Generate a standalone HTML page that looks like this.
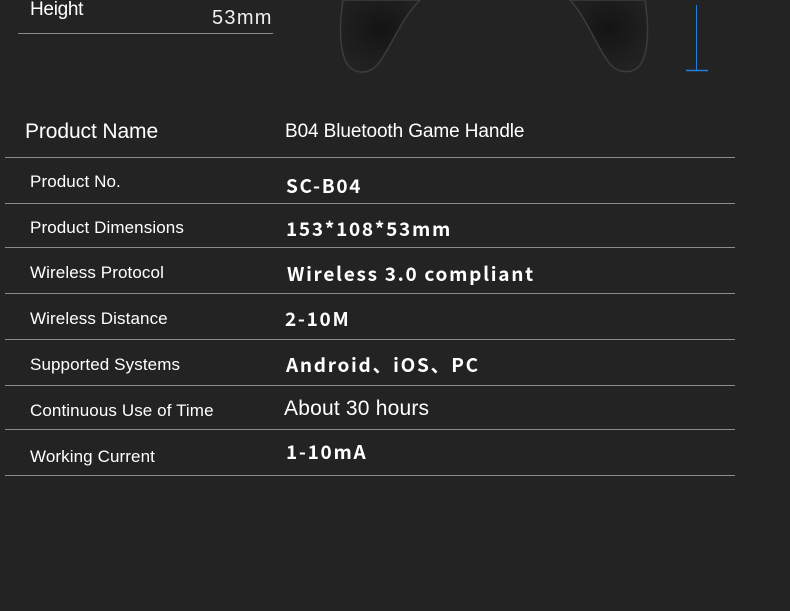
<html><head><style>
body{margin:0;width:790px;height:611px;background:#232323;overflow:hidden;position:relative;font-family:"Liberation Sans",Arial,sans-serif;color:#fff}
.t{position:absolute;white-space:nowrap}
.l{font-size:17px;letter-spacing:0.1px}
.v{font-family:"Noto Sans CJK SC","DejaVu Sans",sans-serif;font-weight:bold;font-size:19px;letter-spacing:1.7px}
.h{position:absolute;height:1px;background:#8a8a8a;left:5px;width:730px}
</style></head><body>
<svg style="position:absolute;left:0;top:0" width="790" height="80">
<defs><radialGradient id="g" cx="0.5" cy="0.4" r="0.6"><stop offset="0" stop-color="#141414"/><stop offset="1" stop-color="#222"/></radialGradient></defs>
<path d="M343 0 C340 20 338 45 346 62 C352 74 368 76 378 64 C392 46 400 20 420 0 Z" fill="url(#g)" stroke="#3c3c3c" stroke-width="1.5"/>
<path d="M645 0 C648 20 650 45 642 62 C636 74 620 75 610 64 C596 46 588 20 570 0 Z" fill="url(#g)" stroke="#3c3c3c" stroke-width="1.5"/>
<line x1="696.5" y1="5" x2="696.5" y2="70" stroke="#1e7fe0" stroke-width="1"/>
<line x1="686" y1="70.5" x2="708" y2="70.5" stroke="#1e7fe0" stroke-width="1.5"/>
</svg>
<div class="t" style="left:30px;top:-1px;font-size:19px;letter-spacing:-0.3px">Height</div>
<div class="t" style="left:212px;top:7px;font-size:20px;letter-spacing:1.3px;color:#eee">53mm</div>
<div style="position:absolute;left:18px;top:33px;width:255px;height:1px;background:#8a8a8a"></div>

<div class="t" style="left:25px;top:120px;font-size:21px;letter-spacing:-0.1px">Product Name</div>
<div class="t" style="left:285px;top:121px;font-size:19px;letter-spacing:-0.1px">B04 Bluetooth Game Handle</div>
<div class="h" style="top:157px"></div>
<div class="t l" style="left:30px;top:172px">Product No.</div>
<div class="t v" style="left:286px;top:172px">SC-B04</div>
<div class="h" style="top:203px"></div>
<div class="t l" style="left:30px;top:218px">Product Dimensions</div>
<div class="t v" style="left:286px;top:215px">153*108*53mm</div>
<div class="h" style="top:247px"></div>
<div class="t l" style="left:30px;top:263px">Wireless Protocol</div>
<div class="t v" style="left:287px;top:260px">Wireless 3.0 compliant</div>
<div class="h" style="top:293px"></div>
<div class="t l" style="left:30px;top:309px">Wireless Distance</div>
<div class="t v" style="left:285px;top:305px">2-10M</div>
<div class="h" style="top:339px"></div>
<div class="t l" style="left:30px;top:355px">Supported Systems</div>
<div class="t v" style="left:286px;top:351px">Android、iOS、PC</div>
<div class="h" style="top:385px"></div>
<div class="t l" style="left:30px;top:401px">Continuous Use of Time</div>
<div class="t" style="left:284px;top:397px;font-size:21px;letter-spacing:0.2px">About 30 hours</div>
<div class="h" style="top:429px"></div>
<div class="t l" style="left:30px;top:447px">Working Current</div>
<div class="t v" style="left:286px;top:438px">1-10mA</div>
<div class="h" style="top:475px"></div>
</body></html>
